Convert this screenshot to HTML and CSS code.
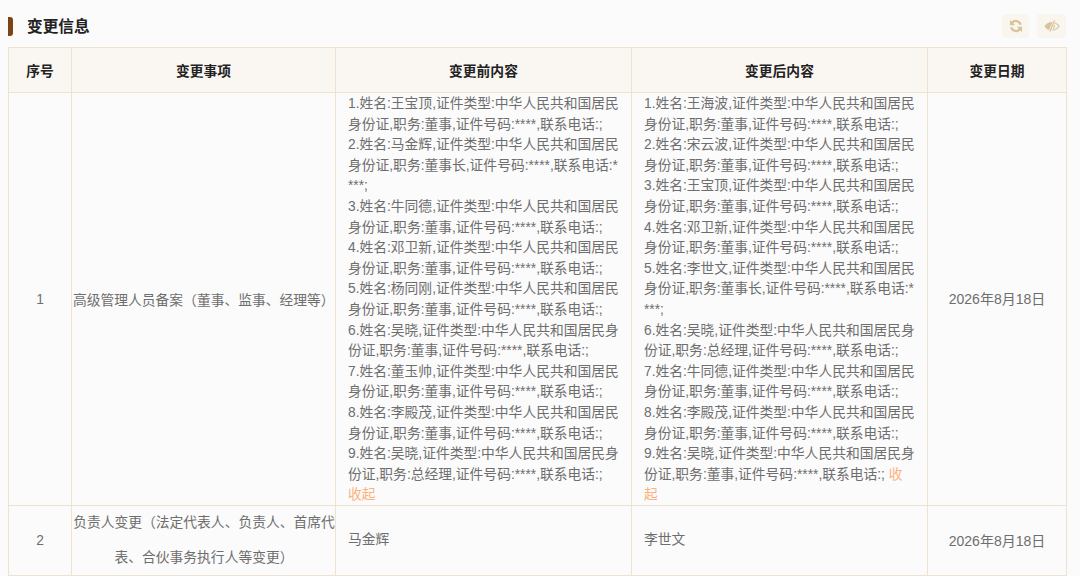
FILE: index.html
```html
<!DOCTYPE html>
<html lang="zh">
<head>
<meta charset="utf-8">
<title>变更信息</title>
<link rel="stylesheet" href="styles.css">
</head>
<body>
<section class="panel">
  <header class="head">
    <span class="mark"></span>
    <h2 class="title">变更信息</h2>
    <div class="tools">
      <button class="tool" type="button" aria-label="刷新">
        <svg viewBox="0 0 14 14" width="14" height="14"><path d="M12.800 5.800A6 6 0 0 0 2.700 2.600L1 1v5.200h5.200L4.200 4.200a3.700 3.700 0 0 1 6.200 1.600zM1.200 8.200a6 6 0 0 0 10.100 3.200L13 13V7.800H7.800l2 2a3.700 3.700 0 0 1-6.200-1.600z" fill="#d8c39b"/></svg>
      </button>
      <button class="tool tool-wide" type="button" aria-label="隐藏">
        <svg viewBox="0 0 16 14" width="16" height="14"><path d="M.5 7C3 3.500 6 2.500 8.500 3L5 11C3 10.500 1.500 9 .5 7z" fill="#d8c39b"/><path d="M10.500 1.500 6 12.500" stroke="#d8c39b" stroke-width="1.300" fill="none"/><path d="M10.800 4c2 .8 3.500 2 4.400 3-1.200 2-3.700 3.800-6.700 4M10 6c.8 1.500 0 3-1 3.500" stroke="#d8c39b" stroke-width="1.100" fill="none"/></svg>
      </button>
    </div>
  </header>
  <table class="grid">
    <colgroup>
      <col class="c-no"><col class="c-item"><col class="c-text"><col class="c-text"><col class="c-date">
    </colgroup>
    <thead>
      <tr><th>序号</th><th>变更事项</th><th>变更前内容</th><th>变更后内容</th><th>变更日期</th></tr>
    </thead>
    <tbody>
      <tr class="r1">
        <td class="center">1</td>
        <td class="item">高级管理人员备案（董事、监事、经理等）</td>
        <td class="text"><div class="text-body">1.姓名:王宝顶,证件类型:中华人民共和国居民身份证,职务:董事,证件号码:****,联系电话:;<br>2.姓名:马金辉,证件类型:中华人民共和国居民身份证,职务:董事长,证件号码:****,联系电话:****;<br>3.姓名:牛同德,证件类型:中华人民共和国居民身份证,职务:董事,证件号码:****,联系电话:;<br>4.姓名:邓卫新,证件类型:中华人民共和国居民身份证,职务:董事,证件号码:****,联系电话:;<br>5.姓名:杨同刚,证件类型:中华人民共和国居民身份证,职务:董事,证件号码:****,联系电话:;<br>6.姓名:吴晓,证件类型:中华人民共和国居民身份证,职务:董事,证件号码:****,联系电话:;<br>7.姓名:董玉帅,证件类型:中华人民共和国居民身份证,职务:董事,证件号码:****,联系电话:;<br>8.姓名:李殿茂,证件类型:中华人民共和国居民身份证,职务:董事,证件号码:****,联系电话:;<br>9.姓名:吴晓,证件类型:中华人民共和国居民身份证,职务:总经理,证件号码:****,联系电话:; <a class="fold">收起</a></div></td>
        <td class="text"><div class="text-body">1.姓名:王海波,证件类型:中华人民共和国居民身份证,职务:董事,证件号码:****,联系电话:;<br>2.姓名:宋云波,证件类型:中华人民共和国居民身份证,职务:董事,证件号码:****,联系电话:;<br>3.姓名:王宝顶,证件类型:中华人民共和国居民身份证,职务:董事,证件号码:****,联系电话:;<br>4.姓名:邓卫新,证件类型:中华人民共和国居民身份证,职务:董事,证件号码:****,联系电话:;<br>5.姓名:李世文,证件类型:中华人民共和国居民身份证,职务:董事长,证件号码:****,联系电话:****;<br>6.姓名:吴晓,证件类型:中华人民共和国居民身份证,职务:总经理,证件号码:****,联系电话:;<br>7.姓名:牛同德,证件类型:中华人民共和国居民身份证,职务:董事,证件号码:****,联系电话:;<br>8.姓名:李殿茂,证件类型:中华人民共和国居民身份证,职务:董事,证件号码:****,联系电话:;<br>9.姓名:吴晓,证件类型:中华人民共和国居民身份证,职务:董事,证件号码:****,联系电话:; <a class="fold">收起</a></div></td>
        <td class="center date">2026年8月18日</td>
      </tr>
      <tr class="r2">
        <td class="center">2</td>
        <td class="item tall">负责人变更（法定代表人、负责人、首席代表、合伙事务执行人等变更）</td>
        <td class="text">马金辉</td>
        <td class="text">李世文</td>
        <td class="center date">2026年8月18日</td>
      </tr>
    </tbody>
  </table>
</section>
</body>
</html>
```

FILE: styles.css
```css
* { box-sizing: border-box; }
html, body { margin: 0; padding: 0; }
body {
  width: 1080px;
  height: 576px;
  overflow: hidden;
  background: #fbfbfb;
  font-family: "Liberation Sans", "Noto Sans CJK SC", sans-serif;
  color: #6e6e6e;
}
.panel { padding: 8px 14px 0 8px; }
.head {
  display: flex;
  align-items: center;
  height: 39px;
  padding-bottom: 3px;
}
.mark {
  width: 5px;
  height: 19px;
  background: #7c4415;
  border-radius: 0 3px 3px 0;
}
.title {
  margin: 0 0 0 14px;
  padding-top: 1px;
  font-size: 15.7px;
  line-height: 20px;
  font-weight: 700;
  color: #222;
}
.tools { margin-left: auto; display: flex; gap: 8px; }
.tool {
  display: flex;
  align-items: center;
  justify-content: center;
  width: 27px;
  height: 24px;
  padding: 0;
  border: 0;
  border-radius: 4px;
  background: #f9f5ef;
}
.tool-wide { width: 29px; }
.grid {
  width: 1058px;
  border-collapse: collapse;
  table-layout: fixed;
  font-size: 13.78px;
}
.c-no { width: 63px; }
.c-item { width: 264px; }
.c-text { width: 296px; }
.c-date { width: 139px; }
th, td { border: 1px solid #efe3d0; }
th {
  height: 45px;
  background: #faf7f2;
  color: #222;
  font-weight: 700;
  text-align: center;
}
td { padding: 0; }
.r1 { height: 413px; }
.r2 { height: 69px; }
.center { text-align: center; }
.date { font-size: 14px; padding-bottom: 2px; }
.item { padding: 0 0 0 1px; }
.tall { line-height: 34.5px; text-align: center; }
.text {
  padding: 0 11.5px 0 12px;
  line-height: 20.6px;
  word-break: break-all;
}
.text-body { margin: 1px 0 -1px; }
.fold { color: #fdb27d; }
```
